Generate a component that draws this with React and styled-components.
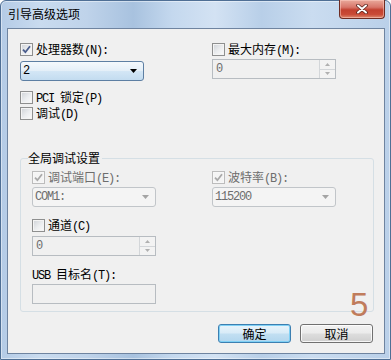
import React from "react"
import styled, { createGlobalStyle } from "styled-components"

const GlobalStyle = createGlobalStyle`
  html, body {
    margin: 0;
    padding: 0;
    background: #ffffff;
  }
  body {
    width: 391px;
    height: 360px;
    overflow: hidden;
  }
`

const Window = styled.div`
  width: 391px;
  height: 360px;
  box-sizing: border-box;
  display: flex;
  flex-direction: column;
  padding: 0 5px 5px 6px;
  border: 1px solid #4f6f95;
  border-radius: 6px 6px 0 0;
  box-shadow: inset 0 0 0 1px rgba(255, 255, 255, 0.45);
  background: linear-gradient(
    90deg,
    #b4cbe6 0%,
    #c9dbef 10%,
    #bfd3ea 22%,
    #a8c2df 34%,
    #c4d8ee 44%,
    #d3e2f3 55%,
    #b8cfe8 67%,
    #cadcf0 80%,
    #bad0e9 100%
  );
  font-family: "Noto Sans CJK SC", sans-serif;
  font-size: 12px;
  color: #000;
`

const TitleBar = styled.div`
  height: 27px;
  display: flex;
  align-items: flex-start;
  flex: none;
`

const Title = styled.div`
  padding: 6px 0 0 1px;
  line-height: 14px;
  color: #000;
`

const CloseButton = styled.div`
  margin: -1px 0 0 auto;
  width: 46px;
  height: 19px;
  box-sizing: border-box;
  display: flex;
  align-items: center;
  justify-content: center;
  border: 1px solid #6e2b22;
  border-top: none;
  border-radius: 0 0 4px 4px;
  background: linear-gradient(#e9a99b 0%, #d8766a 40%, #c2402f 55%, #c94a36 80%, #dd8a70 100%);
  box-shadow: inset 0 0 0 1px rgba(255, 210, 200, 0.5);
`

const Client = styled.div`
  position: relative;
  flex: 1;
  background: #f0f0f0;
  border: 1px solid #6f84a0;
`

const TopGrid = styled.div`
  display: grid;
  grid-template-columns: 192px 1fr;
  padding: 14px 0 0 12px;
`

const Column = styled.div`
  display: flex;
  flex-direction: column;
  align-items: flex-start;
`

const Latin = styled.span`
  font-family: "Liberation Mono", monospace;
  letter-spacing: -1.2px;
`

const CheckRow = styled.div`
  display: flex;
  align-items: center;
  gap: 3px;
  height: 13px;
  line-height: 13px;
  margin-top: ${p => p.$mt || 0}px;
  color: ${p => (p.$disabled ? "#6d6d6d" : "#000")};
  white-space: nowrap;
`

const Box = styled.span`
  width: 13px;
  height: 13px;
  flex: none;
  box-sizing: border-box;
  display: flex;
  align-items: center;
  justify-content: center;
  border: 1px solid ${p => (p.$disabled ? "#bcbcbc" : "#8e8f8f")};
  background: ${p =>
    p.$disabled ? "#f4f4f4" : "linear-gradient(135deg, #cfd2d7 0%, #eceef0 55%, #fbfbfb 100%)"};
  box-shadow: inset 0 0 0 1px ${p => (p.$disabled ? "#f7f7f7" : "#f4f4f4")};
`

const Field = styled.div`
  width: 124px;
  height: 20px;
  box-sizing: border-box;
  margin-top: ${p => p.$mt || 0}px;
  display: flex;
  align-items: center;
  justify-content: space-between;
  padding: 0 0 0 3px;
  border: 1px solid #b7bcc1;
  background: #f0f0f0;
  color: #6d6d6d;
`

const ComboBox = styled(Field)`
  padding: 0 6px 0 2px;
  border-radius: 3px;
  border-color: ${p => (p.$disabled ? "#c1c5c9" : "#5d7fa3")};
  background: ${p =>
    p.$disabled
      ? "#f4f4f4"
      : "linear-gradient(#f4f9fd 0%, #e4eff8 48%, #d3e6f5 52%, #c3dcf0 100%)"};
  color: ${p => (p.$disabled ? "#6d6d6d" : "#000")};
`

const FieldText = styled.span`
  font-family: "Liberation Mono", monospace;
  letter-spacing: -1.2px;
  line-height: 14px;
`

const SpinButtons = styled.div`
  display: flex;
  flex-direction: column;
  gap: 0;
  height: 18px;
  width: 16px;
  box-sizing: border-box;
  border-left: 1px solid #d3d6d9;
`

const SpinBtn = styled.div`
  flex: 1;
  display: flex;
  align-items: center;
  justify-content: center;
  background: #f3f3f3;
  border-top: ${p => (p.$down ? "1px solid #d3d6d9" : "none")};
`

const Group = styled.fieldset`
  margin: 32px 10px 0 12px;
  padding: 7px 0 7px 7px;
  border: 1px solid #d5dfe5;
  border-radius: 3px;
  min-width: 0;
`

const Legend = styled.legend`
  padding: 0 2px 0 0;
  line-height: 12px;
  color: #000;
`

const GroupGrid = styled.div`
  display: grid;
  grid-template-columns: 180px 1fr;
  padding-left: 4px;
`

const PlainLabel = styled.div`
  margin-top: ${p => p.$mt || 0}px;
  line-height: 12px;
  height: 12px;
  white-space: nowrap;
`

const ButtonRow = styled.div`
  display: flex;
  justify-content: flex-end;
  gap: 9px;
  margin-top: 12px;
  padding-right: 11px;
`

const Button = styled.button`
  width: 73px;
  height: 19px;
  box-sizing: border-box;
  padding: 0;
  font-family: "Noto Sans CJK SC", sans-serif;
  font-size: 12px;
  line-height: 16px;
  color: #000;
  border-radius: 3px;
  border: 1px solid ${p => (p.$primary ? "#3c7fb1" : "#707070")};
  background: ${p =>
    p.$primary
      ? "linear-gradient(#e8f4fb 0%, #d8ebf7 48%, #c2dff2 52%, #b2d6ee 100%)"
      : "linear-gradient(#f2f2f2 0%, #ebebeb 48%, #dddddd 52%, #cfcfcf 100%)"};
  box-shadow: inset 0 0 0 1px ${p => (p.$primary ? "#7fd0f5" : "rgba(255,255,255,0.8)")};
`

const Mark = styled.div`
  position: absolute;
  left: 342px;
  top: 259px;
  font-family: "Liberation Sans", sans-serif;
  font-size: 33px;
  line-height: 33px;
  color: #c07c5c;
`

const Check = ({ checked, disabled, mt, children }) => (
  <CheckRow $disabled={disabled} $mt={mt}>
    <Box $disabled={disabled}>
      {checked && (
        <svg width="9" height="9" viewBox="0 0 9 9">
          <path
            d="M1 4.6 L3.4 7.2 L8 1.2"
            fill="none"
            stroke={disabled ? "#a9a9a9" : "#4a5d8c"}
            strokeWidth="1.8"
          />
        </svg>
      )}
    </Box>
    <span>{children}</span>
  </CheckRow>
)

const Arrow = ({ disabled }) => (
  <svg width="7" height="4" viewBox="0 0 7 4">
    <path d="M0 0 H7 L3.5 4 Z" fill={disabled ? "#a4a4a4" : "#000"} />
  </svg>
)

const Combo = ({ value, disabled, mt }) => (
  <ComboBox $disabled={disabled} $mt={mt}>
    <FieldText>{value}</FieldText>
    <Arrow disabled={disabled} />
  </ComboBox>
)

const Spinner = ({ value, mt }) => (
  <Field $mt={mt}>
    <FieldText>{value}</FieldText>
    <SpinButtons>
      <SpinBtn>
        <svg width="5" height="3" viewBox="0 0 5 3">
          <path d="M0 3 H5 L2.5 0 Z" fill="#b0b0b0" />
        </svg>
      </SpinBtn>
      <SpinBtn $down>
        <svg width="5" height="3" viewBox="0 0 5 3">
          <path d="M0 0 H5 L2.5 3 Z" fill="#b0b0b0" />
        </svg>
      </SpinBtn>
    </SpinButtons>
  </Field>
)

const CloseGlyph = () => (
  <svg width="12" height="10" viewBox="0 0 12 10">
    <path d="M2 1.5 L10 8.5 M10 1.5 L2 8.5" stroke="#5a231c" strokeWidth="3.6" strokeLinecap="round" />
    <path d="M2 1.5 L10 8.5 M10 1.5 L2 8.5" stroke="#ffffff" strokeWidth="2" strokeLinecap="round" />
  </svg>
)

const App = () => {
  return (
    <>
      <GlobalStyle />
      <Window>
        <TitleBar>
          <Title>引导高级选项</Title>
          <CloseButton>
            <CloseGlyph />
          </CloseButton>
        </TitleBar>
        <Client>
          <TopGrid>
            <Column>
              <Check checked>
                处理器数<Latin>(N):</Latin>
              </Check>
              <Combo value="2" mt={5} />
              <Check mt={10}>
                <Latin>PCI </Latin>锁定<Latin>(P)</Latin>
              </Check>
              <Check mt={3}>
                调试<Latin>(D)</Latin>
              </Check>
            </Column>
            <Column>
              <Check>
                最大内存<Latin>(M):</Latin>
              </Check>
              <Spinner value="0" mt={3} />
            </Column>
          </TopGrid>

          <Group>
            <Legend>全局调试设置</Legend>
            <GroupGrid>
              <Column>
                <Check checked disabled>
                  调试端口<Latin>(E):</Latin>
                </Check>
                <Combo value="COM1:" disabled mt={3} />
                <Check mt={12}>
                  通道<Latin>(C)</Latin>
                </Check>
                <Spinner value="0" mt={4} />
                <PlainLabel $mt={12}>
                  <Latin>USB </Latin>目标名<Latin>(T):</Latin>
                </PlainLabel>
                <Field $mt={4} />
              </Column>
              <Column>
                <Check checked disabled>
                  波特率<Latin>(B):</Latin>
                </Check>
                <Combo value="115200" disabled mt={3} />
              </Column>
            </GroupGrid>
          </Group>

          <ButtonRow>
            <Button $primary>确定</Button>
            <Button>取消</Button>
          </ButtonRow>
          <Mark>5</Mark>
        </Client>
      </Window>
    </>
  )
}

export default App
